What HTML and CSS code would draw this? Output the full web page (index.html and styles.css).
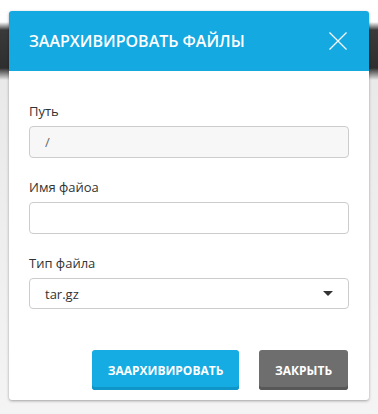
FILE: index.html
```html
<!DOCTYPE html>
<html lang="ru">

<head>
    <meta charset="UTF-8">
    <meta name="viewport" content="width=device-width, initial-scale=1.0">
    <title>Заархивировать файлы</title>
    <link rel="stylesheet" href="styles.css">
</head>

<body>
    <div class="modal">
        <div class="modal-header">
            <h3 class="modal-title">Заархивировать файлы</h3>
            <button type="button" class="close-btn" aria-label="Закрыть">
                <svg width="18" height="18" viewBox="0 0 18 18">
                    <path d="M0.5 0.5 L17.5 17.5 M17.5 0.5 L0.5 17.5" stroke="#fff" stroke-width="1.2" fill="none"/>
                </svg>
            </button>
        </div>

        <form class="modal-body">
            <label for="path">Путь</label>
            <input type="text" id="path" value="/" disabled>

            <label for="filename">Имя файоа</label>
            <input type="text" id="filename">

            <label for="filetype">Тип файла</label>
            <div class="select-wrap">
                <select id="filetype">
                    <option>tar.gz</option>
                    <option>zip</option>
                    <option>tar</option>
                </select>
            </div>
        </form>

        <div class="modal-footer">
            <button type="button" class="btn btn-primary">Заархивировать</button>
            <button type="button" class="btn btn-default">Закрыть</button>
        </div>
    </div>
</body>
</html>
```

FILE: styles.css
```css
body {
    margin: 0;
    padding: 11px 0 0 9px;
    font-family: 'Open Sans', sans-serif;
    background-color: #f2f2f2;
    background-image:
        linear-gradient(to bottom, #fff 0, #fff 22px, #3a3a3a 30px, #2e2e2e 68px, #e9e9e9 80px, #f4f4f4 100%);
    height: 414px;
    box-sizing: border-box;
}

.modal {
    width: 360px;
    background-color: #fff;
    border-radius: 3px;
    box-shadow: 0 1px 3px rgba(0, 0, 0, 0.35);
}

.modal-header {
    height: 60px;
    background-color: #14a9e1;
    border-radius: 3px 3px 0 0;
    display: flex;
    align-items: center;
    justify-content: space-between;
    padding: 0 22px 0 20px;
}

.modal-title {
    margin: 0;
    color: #fff;
    font-size: 16px;
    font-weight: 600;
    text-transform: uppercase;
}

.close-btn {
    background: none;
    border: none;
    padding: 0;
    width: 18px;
    height: 18px;
    display: flex;
    cursor: pointer;
}

.modal-body {
    padding: 31px 20px 0 20px;
}

label {
    display: block;
    font-size: 13px;
    line-height: 18px;
    color: #333;
    margin-bottom: 6px;
}

input, select {
    display: block;
    width: 100%;
    height: 32px;
    box-sizing: border-box;
    border: 1px solid #ccc;
    border-radius: 4px;
    padding: 0 15px;
    font-family: 'Open Sans', sans-serif;
    font-size: 13px;
    color: #333;
    background-color: #fff;
    margin: 0 0 20px 0;
}

input:disabled {
    background-color: #f7f7f7;
    color: #666;
}

.select-wrap {
    position: relative;
}

.select-wrap select {
    appearance: none;
    -webkit-appearance: none;
    height: 31px;
    margin-bottom: 0;
}

.select-wrap::after {
    content: "";
    position: absolute;
    right: 16px;
    top: 13px;
    border-left: 5px solid transparent;
    border-right: 5px solid transparent;
    border-top: 5px solid #333;
}

.modal-footer {
    display: flex;
    justify-content: flex-end;
    gap: 20px;
    padding: 41px 21px 10px 20px;
}

.btn {
    height: 40px;
    padding: 0;
    border: none;
    border-radius: 3px;
    color: #fff;
    font-family: 'Open Sans', sans-serif;
    font-size: 12px;
    font-weight: 700;
    text-transform: uppercase;
    cursor: pointer;
}

.btn-primary {
    width: 147px;
    background-color: #14ace2;
    box-shadow: inset 0 -3px 0 #0f95c7;
}

.btn-default {
    width: 89px;
    background-color: #6e6e6e;
    box-shadow: inset 0 -3px 0 #575757;
}
```
